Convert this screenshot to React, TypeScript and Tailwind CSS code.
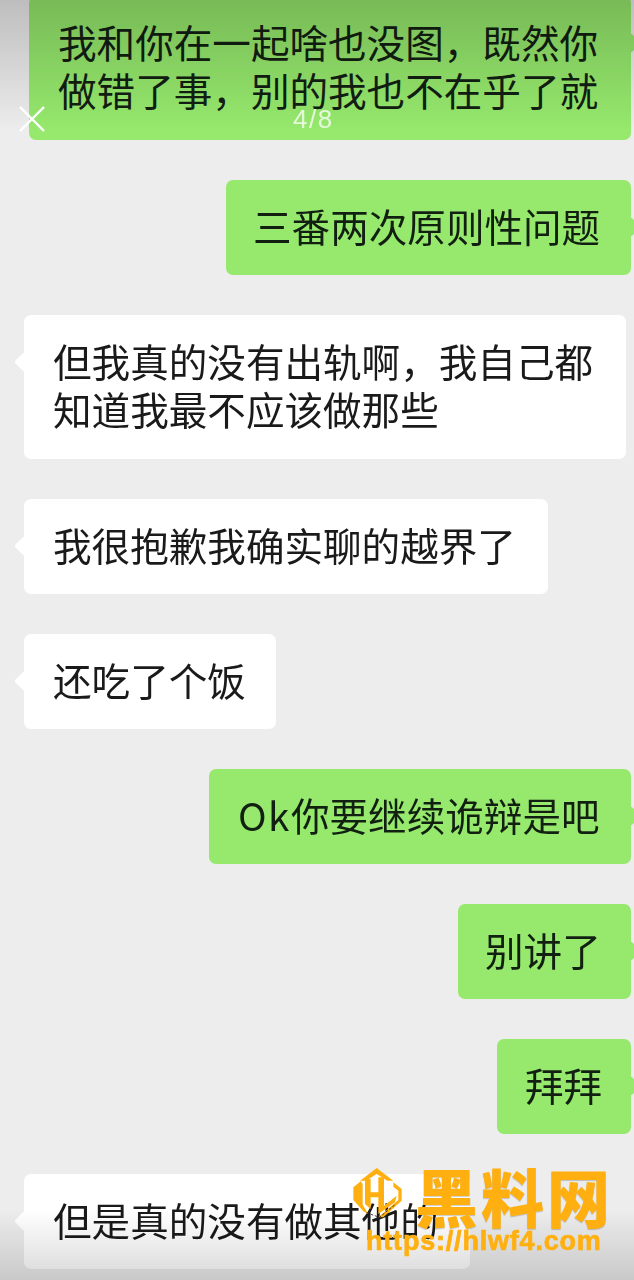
const font = '"Noto Sans CJK SC", "Noto Sans", sans-serif';

function Bubble({ side, className, children }: { side: "left" | "right"; className: string; children: React.ReactNode }) {
  const right = side === "right";
  return (
    <div
      className={
        "relative rounded-[7px] pt-[21px] whitespace-nowrap text-[38.6px] leading-[48px] " +
        (right ? "self-end mr-[3px] bg-[#96e96d] text-[#122012] " : "self-start ml-[24px] bg-white text-[#1a1a1a] ") +
        className
      }
    >
      <span
        className={
          "absolute top-[40px] h-[14px] w-[14px] rotate-45 rounded-[2px] " +
          (right ? "-right-[7px] bg-[#96e96d]" : "-left-[7px] bg-white")
        }
      />
      <span className="relative">{children}</span>
    </div>
  );
}

function Logo() {
  return (
    <svg viewBox="0 0 180 180" className="absolute left-[350px] top-[1164px] h-[60px] w-[60px]" fill="#ffb010">
      <path d="M80 12 L130 50 L112 50 L80 30 L48 50 L30 50 Z" />
      <path d="M10 70 L32 52 L38 60 L38 122 L55 150 L40 142 L10 108 Z" />
      <path d="M45 45 L62 45 L62 85 L85 85 L85 40 L102 40 L102 125 L140 95 L135 115 L85 150 L85 100 L62 100 L62 135 L45 120 Z" />
      <path d="M130 55 L155 75 L155 110 L100 160 L85 160 L145 108 L145 80 L130 68 Z" />
      <path d="M50 146 L88 160 L135 122" fill="none" stroke="#222" strokeWidth="2.5" strokeDasharray="8 5" />
    </svg>
  );
}

export default function App() {
  return (
    <div
      className="relative h-[1280px] w-[634px] overflow-hidden bg-[#ededed]"
      style={{ fontFamily: font }}
    >
      <div className="flex -mt-[4px] flex-col gap-[40px] blur-[0.4px]">
        <Bubble side="right" className="w-[602px] pl-[29px] pb-[27px]">
          我和你在一起啥也没图，既然你
          <br />
          做错了事，别的我也不在乎了就
        </Bubble>
        <Bubble side="right" className="w-[405px] pl-[27px] pb-[26px]">三番两次原则性问题</Bubble>
        <Bubble side="left" className="w-[602px] pl-[29px] pb-[27px]">
          但我真的没有出轨啊，我自己都
          <br />
          知道我最不应该做那些
        </Bubble>
        <Bubble side="left" className="w-[524px] pl-[29px] pb-[26px]">我很抱歉我确实聊的越界了</Bubble>
        <Bubble side="left" className="w-[252px] pl-[29px] pb-[26px]">还吃了个饭</Bubble>
        <Bubble side="right" className="w-[422px] pl-[29px] pb-[26px]">
          <span className="tracking-[1.5px]">Ok</span>你要继续诡辩是吧
        </Bubble>
        <Bubble side="right" className="w-[173px] pl-[27px] pb-[26px]">别讲了</Bubble>
        <Bubble side="right" className="w-[134px] pl-[28px] pb-[26px]">拜拜</Bubble>
        <Bubble side="left" className="w-[446px] pl-[29px] pb-[26px]">但是真的没有做其他的</Bubble>
      </div>

      <div className="pointer-events-none absolute inset-x-0 top-0 h-[130px] bg-gradient-to-b from-black/20 to-transparent" />
      <div className="pointer-events-none absolute inset-x-0 bottom-0 h-[70px] bg-gradient-to-t from-black/15 to-transparent" />

      <svg viewBox="0 0 28 28" className="absolute left-[18px] top-[105px] h-[28px] w-[28px]" stroke="#fff" strokeWidth="2.4" fill="none">
        <path d="M2 2 L26 26 M26 2 L2 26" />
      </svg>
      <div
        className="absolute left-[293px] top-[103px] text-[26px] leading-[32px] tracking-[1.5px] text-white/75"
        style={{ fontFamily: '"Liberation Sans", sans-serif' }}
      >
        4/8
      </div>

      <Logo />
      <div className="absolute left-[415px] top-[1147px] text-[63px] font-black leading-[96px] tracking-[3px] text-[#ffb010] [text-shadow:0_1px_1px_rgba(0,0,0,0.2)]">
        黑料网
      </div>
      <div
        className="absolute left-[366px] top-[1226px] text-[27px] font-bold leading-[30px] tracking-[0.8px] text-[#ffb010] [-webkit-text-stroke:0.7px_#ffb010]"
        style={{ fontFamily: '"Liberation Sans", sans-serif' }}
      >
        https://hlwf4.com
      </div>
    </div>
  );
}
